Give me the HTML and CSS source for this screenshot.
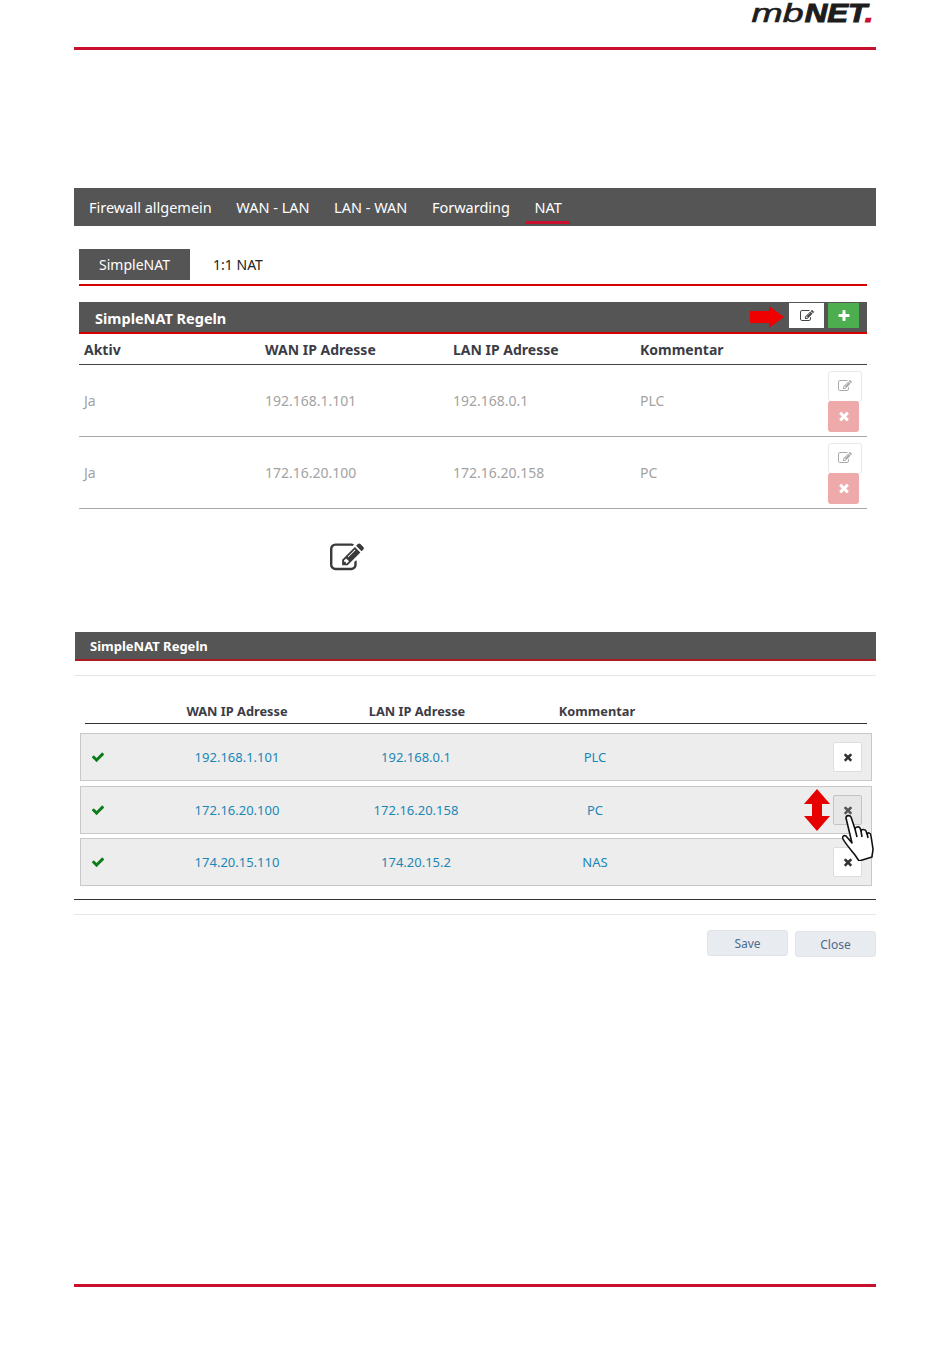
FILE: index.html
```html
<!DOCTYPE html>
<html lang="en">
    <head>
        <meta charset="UTF-8" />
        <meta name="viewport" content="width=device-width, initial-scale=1.0" />
        <title>SimpleNAT Regeln</title>
        <link rel="stylesheet" href="styles.css">
    </head>
    <body>
        <!-- Icon set -->
        <svg class="icon-defs" xmlns="http://www.w3.org/2000/svg">
            <symbol id="i-edit" viewBox="0 0 1792 1792"><path d="M888 1184l116-116-152-152-116 116v56h96v96h56zm440-720q-16-16-33 1l-350 350q-17 17-1 33t33-1l350-350q17-17 1-33zm80 594v190q0 119-84.5 203.5t-203.5 84.5h-832q-119 0-203.5-84.5t-84.5-203.5v-832q0-119 84.5-203.5t203.5-84.5h832q63 0 117 25 15 7 18 23 3 17-9 29l-49 49q-14 14-32 8-23-6-45-6h-832q-66 0-113 47t-47 113v832q0 66 47 113t113 47h832q66 0 113-47t47-113v-126q0-13 9-22l64-64q15-15 35-7t20 29zm-96-738l288 288-672 672h-288v-288zm444 132l-92 92-288-288 92-92q28-28 68-28t68 28l152 152q28 28 28 68t-28 68z"/></symbol>
            <symbol id="i-times" viewBox="0 0 1792 1792"><path d="M1490 1322q0 40-28 68l-136 136q-28 28-68 28t-68-28l-294-294-294 294q-28 28-68 28t-68-28l-136-136q-28-28-28-68t28-68l294-294-294-294q-28-28-28-68t28-68l136-136q28-28 68-28t68 28l294 294 294-294q28-28 68-28t68 28l136 136q28 28 28 68t-28 68l-294 294 294 294q28 28 28 68z"/></symbol>
            <symbol id="i-plus" viewBox="0 0 1792 1792"><path d="M1600 736v192q0 40-28 68t-68 28h-416v416q0 40-28 68t-68 28h-192q-40 0-68-28t-28-68v-416h-416q-40 0-68-28t-28-68v-192q0-40 28-68t68-28h416v-416q0-40 28-68t68-28h192q40 0 68 28t28 68v416h416q40 0 68 28t28 68z"/></symbol>
            <symbol id="i-check" viewBox="0 0 1792 1792"><path d="M1671 566q0 40-28 68l-724 724-136 136q-28 28-68 28t-68-28l-136-136-362-362q-28-28-28-68t28-68l136-136q28-28 68-28t68 28l294 295 656-657q28-28 68-28t68 28l136 136q28 28 28 68z"/></symbol>
        </svg>

        <div class="page">
            <!-- Header -->
            <header class="page-header">
                <div class="logo"><span class="logo-mb">mb</span><span class="logo-net">NET</span><span class="logo-dot">.</span></div>
            </header>

            <!-- Main nav -->
            <nav class="main-nav">
                <a href="#">Firewall allgemein</a>
                <a href="#">WAN - LAN</a>
                <a href="#">LAN - WAN</a>
                <a href="#">Forwarding</a>
                <a href="#" class="active">NAT</a>
            </nav>

            <div class="content">
                <div class="sub-tabs">
                    <a href="#" class="sub-tab active">SimpleNAT</a>
                    <a href="#" class="sub-tab">1:1 NAT</a>
                </div>

                <div class="panel-head">
                    <span class="panel-title">SimpleNAT Regeln</span>
                    <svg class="arrow-right" viewBox="0 0 34 22"><path d="M0 5h19V0l15 11-15 11v-5H0z"/></svg>
                    <div class="panel-actions">
                        <button class="btn-head btn-white"><svg class="icon"><use href="#i-edit"/></svg></button>
                        <button class="btn-head btn-green"><svg class="icon"><use href="#i-plus"/></svg></button>
                    </div>
                </div>

                <div class="rule-row rule-head">
                    <span>Aktiv</span>
                    <span>WAN IP Adresse</span>
                    <span>LAN IP Adresse</span>
                    <span>Kommentar</span>
                </div>
                <div class="rule-row">
                    <span>Ja</span>
                    <span>192.168.1.101</span>
                    <span>192.168.0.1</span>
                    <span>PLC</span>
                    <div class="row-actions">
                        <button class="btn-small btn-edit"><svg class="icon"><use href="#i-edit"/></svg></button>
                        <button class="btn-small btn-delete"><svg class="icon"><use href="#i-times"/></svg></button>
                    </div>
                </div>
                <div class="rule-row">
                    <span>Ja</span>
                    <span>172.16.20.100</span>
                    <span>172.16.20.158</span>
                    <span>PC</span>
                    <div class="row-actions">
                        <button class="btn-small btn-edit"><svg class="icon"><use href="#i-edit"/></svg></button>
                        <button class="btn-small btn-delete"><svg class="icon"><use href="#i-times"/></svg></button>
                    </div>
                </div>
            </div>

            <div class="edit-hint"><svg class="icon"><use href="#i-edit"/></svg></div>

            <!-- Edit dialog -->
            <div class="dialog-head">SimpleNAT Regeln</div>
            <div class="dialog-body">
                <div class="list-head">
                    <span></span>
                    <span>WAN IP Adresse</span>
                    <span>LAN IP Adresse</span>
                    <span>Kommentar</span>
                </div>
                <div class="list-row">
                    <svg class="icon check"><use href="#i-check"/></svg>
                    <a href="#">192.168.1.101</a>
                    <a href="#">192.168.0.1</a>
                    <a href="#">PLC</a>
                    <button class="btn-remove"><svg class="icon"><use href="#i-times"/></svg></button>
                </div>
                <div class="list-row">
                    <svg class="icon check"><use href="#i-check"/></svg>
                    <a href="#">172.16.20.100</a>
                    <a href="#">172.16.20.158</a>
                    <a href="#">PC</a>
                    <button class="btn-remove hover"><svg class="icon"><use href="#i-times"/></svg></button>
                    <svg class="arrow-updown" viewBox="0 0 28 42"><path d="M14 0l13 15h-8v12h8L14 42 1 27h8V15H1z"/></svg>
                </div>
                <div class="list-row">
                    <svg class="icon check"><use href="#i-check"/></svg>
                    <a href="#">174.20.15.110</a>
                    <a href="#">174.20.15.2</a>
                    <a href="#">NAS</a>
                    <button class="btn-remove"><svg class="icon"><use href="#i-times"/></svg></button>
                </div>
                <!-- Cursor over the delete button -->
                <svg class="hand" viewBox="0 0 32 48"><path d="M4 5c0-3 4-3 5-1l4 12c0-2 4-3 5-1l1 3c0-2 4-2 5 0l1 3c1-2 4-1 4 2l2 13c0 3-1 5-1 8l-13 4-4-6C9 37 3 30 1 26c-1-3 1-4 3-3l6 7z"/><path d="M13 16l2 8M19 18l1 6M25 20l1 5"/></svg>
            </div>

            <div class="dialog-foot">
                <button class="btn-foot btn-save">Save</button>
                <button class="btn-foot btn-close">Close</button>
            </div>

            <footer class="page-footer"></footer>
        </div>
    </body>
</html>
```

FILE: styles.css
```css
body {
    font-family: "Noto Sans", Arial, sans-serif;
    margin: 0;
    padding: 0;
    background-color: #fff;
    color: #333;
}

button {
    font-family: inherit;
    padding: 0;
    cursor: pointer;
}

a {
    text-decoration: none;
}

.icon-defs {
    display: none;
}

.icon {
    fill: currentColor;
    width: 14px;
    height: 14px;
}

.page {
    width: 802px;
    margin-left: 74px;
    height: 1360px;
}

/* Header */
.page-header {
    height: 47px;
    border-bottom: 3px solid #c8102e;
    display: flex;
    justify-content: flex-end;
}

.logo {
    font-family: "Liberation Sans", Arial, sans-serif;
    font-style: italic;
    font-weight: bold;
    color: #1d1d1d;
    font-size: 26px;
    line-height: 26px;
    height: 26px;
    margin-right: 3px;
    transform: scaleX(1.2);
    transform-origin: right;
}

.logo-mb {
    display: inline-block;
    font-weight: normal;
    -webkit-text-stroke: 0.6px #1d1d1d;
    margin-right: 1px;
    transform: scaleX(1.2);
    transform-origin: right;
}

.logo-net {
    -webkit-text-stroke: 1px #1d1d1d;
}

.logo-dot {
    color: #c8102e;
    -webkit-text-stroke: 1px #c8102e;
}

/* Main nav */
.main-nav {
    margin-top: 138px;
    height: 38px;
    background-color: #555;
    display: flex;
    padding-left: 7px;
}

.main-nav a {
    color: #fff;
    font-size: 14.5px;
    line-height: 38px;
    padding: 0 8px;
    margin-right: 8.5px;
    position: relative;
    white-space: nowrap;
}

.main-nav a.active::after {
    content: "";
    position: absolute;
    left: 0;
    right: 0;
    bottom: 2px;
    height: 3px;
    background-color: #c8102e;
}

.content {
    padding: 23px 9px 0 5px;
}

/* Sub tabs */
.sub-tabs {
    display: flex;
    height: 35px;
    border-bottom: 2px solid #d40000;
}

.sub-tab {
    height: 31px;
    line-height: 31px;
    font-size: 14px;
    color: #222;
    padding: 0 20px;
    width: 71px;
    text-align: center;
}

.sub-tab.active {
    background-color: #555;
    color: #fff;
}

.sub-tab + .sub-tab {
    padding: 0 3px;
    width: 90px;
}

/* Upper table */
.panel-head {
    margin-top: 16px;
    height: 30px;
    background-color: #555;
    border-bottom: 2px solid #d40000;
    display: flex;
    align-items: center;
    justify-content: space-between;
    padding: 0 8px 0 16px;
    position: relative;
}

.panel-title {
    color: #fff;
    font-weight: bold;
    font-size: 14.5px;
    margin-top: 2px;
}

.panel-actions {
    display: flex;
    gap: 4px;
    margin-bottom: 3px;
}

.btn-head {
    width: 35px;
    height: 25px;
    border: 0;
    display: flex;
    align-items: center;
    justify-content: center;
}

.btn-white {
    background-color: #fff;
    color: #444;
}

.btn-green {
    background-color: #4cae4f;
    color: #fff;
    width: 31px;
}

.arrow-right {
    position: absolute;
    right: 83px;
    top: 4px;
    width: 34px;
    height: 22px;
    fill: #f00000;
}

.rule-row {
    display: grid;
    grid-template-columns: 181px 188px 187px 1fr 34px;
    padding: 0 5px;
    height: 71px;
    align-items: center;
    border-bottom: 1px solid #a8a8a8;
    font-size: 14px;
    color: #a3a3a3;
}

.rule-head {
    height: 30px;
    font-weight: bold;
    color: #3c3c46;
    border-bottom-color: #444;
}

.row-actions {
    display: flex;
    flex-direction: column;
    margin-top: 1px;
}

.btn-small {
    width: 31px;
    height: 31px;
    border-radius: 3px;
    display: flex;
    align-items: center;
    justify-content: center;
}

.btn-edit {
    width: 34px;
    background-color: #fff;
    border: 1px solid #e8e8e8;
    color: #aaa;
}

.btn-delete {
    background-color: #eeaaaa;
    border: 0;
    color: #fff;
    margin-top: -1px;
}

/* Lone edit icon */
.edit-hint {
    margin: 32px 0 0 256px;
    height: 91px;
    color: #3a3a3a;
}

.edit-hint .icon {
    width: 34px;
    height: 34px;
    display: block;
}

/* Dialog */
.dialog-head {
    margin-left: 1px;
    height: 27px;
    line-height: 29px;
    background-color: #555;
    border-bottom: 2px solid #a81c22;
    color: #fff;
    font-weight: bold;
    font-size: 13px;
    padding-left: 15px;
}

.dialog-body {
    margin-top: 14px;
    border-top: 1px solid #e6e6e6;
    border-bottom: 1px solid #333;
    padding-bottom: 13px;
    position: relative;
}

.list-head {
    margin: 24px 9px 9px 11px;
    height: 23px;
    display: grid;
    grid-template-columns: 72px 160px 200px 160px;
    border-bottom: 1px solid #333;
    font-weight: bold;
    font-size: 12.8px;
    color: #3c3c46;
    text-align: center;
    line-height: 23px;
}

.list-row {
    margin: 0 4px 5px 6px;
    height: 46px;
    background-color: #ededed;
    border: 1px solid #c8c8c8;
    display: grid;
    grid-template-columns: 76px 160px 198px 160px 1fr;
    align-items: center;
    text-align: center;
    font-size: 13px;
    padding-right: 9px;
    position: relative;
}

.list-row + .list-row + .list-row {
    margin-bottom: 0;
    margin-top: -1px;
}

.list-row a {
    color: #1b87b5;
}

.check {
    color: #0d7d1c;
    margin-left: 10px;
}

.btn-remove {
    justify-self: end;
    width: 29px;
    height: 30px;
    background-color: #fff;
    border: 1px solid #ddd;
    border-radius: 2px;
    color: #333;
    display: flex;
    align-items: center;
    justify-content: center;
}

.btn-remove .icon {
    width: 12px;
    height: 12px;
}

.btn-remove.hover {
    background-color: #e6e6e6;
    border-color: #c4c4c4;
    color: #555;
}

.arrow-updown {
    position: absolute;
    left: 722px;
    top: 2px;
    width: 28px;
    height: 42px;
    fill: #e60000;
}

.hand {
    position: absolute;
    left: 768px;
    top: 137px;
    width: 32px;
    height: 48px;
    fill: #fff;
    stroke: #111;
    stroke-width: 1.6;
    stroke-linejoin: round;
}

.dialog-foot {
    margin-top: 14px;
    border-top: 1px solid #e6e6e6;
    padding-top: 15px;
    display: flex;
    justify-content: flex-end;
    gap: 7px;
    align-items: flex-start;
}

.btn-foot {
    width: 81px;
    height: 26px;
    background-color: #e8ebef;
    border: 1px solid #e0e3e8;
    border-radius: 3px;
    color: #4e6a8e;
    font-size: 12px;
}

.btn-close {
    margin-top: 1px;
}

.page-footer {
    margin-top: 327px;
    border-top: 3px solid #c8102e;
}
```
